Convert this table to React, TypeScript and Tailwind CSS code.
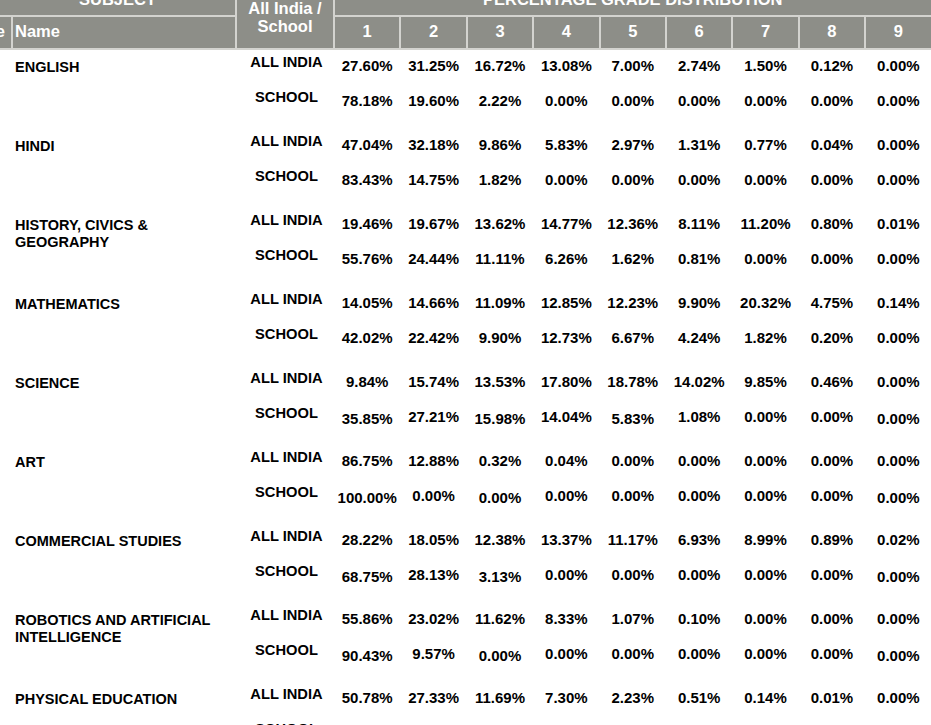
type Group = {
  name: string
  allIndia: string[]
  school: string[]
  low?: number[]
}

const groups: Group[] = [
  {
    name: 'ENGLISH',
    allIndia: ['27.60%', '31.25%', '16.72%', '13.08%', '7.00%', '2.74%', '1.50%', '0.12%', '0.00%'],
    school: ['78.18%', '19.60%', '2.22%', '0.00%', '0.00%', '0.00%', '0.00%', '0.00%', '0.00%'],
  },
  {
    name: 'HINDI',
    allIndia: ['47.04%', '32.18%', '9.86%', '5.83%', '2.97%', '1.31%', '0.77%', '0.04%', '0.00%'],
    school: ['83.43%', '14.75%', '1.82%', '0.00%', '0.00%', '0.00%', '0.00%', '0.00%', '0.00%'],
  },
  {
    name: 'HISTORY, CIVICS & GEOGRAPHY',
    allIndia: ['19.46%', '19.67%', '13.62%', '14.77%', '12.36%', '8.11%', '11.20%', '0.80%', '0.01%'],
    school: ['55.76%', '24.44%', '11.11%', '6.26%', '1.62%', '0.81%', '0.00%', '0.00%', '0.00%'],
  },
  {
    name: 'MATHEMATICS',
    allIndia: ['14.05%', '14.66%', '11.09%', '12.85%', '12.23%', '9.90%', '20.32%', '4.75%', '0.14%'],
    school: ['42.02%', '22.42%', '9.90%', '12.73%', '6.67%', '4.24%', '1.82%', '0.20%', '0.00%'],
  },
  {
    name: 'SCIENCE',
    allIndia: ['9.84%', '15.74%', '13.53%', '17.80%', '18.78%', '14.02%', '9.85%', '0.46%', '0.00%'],
    school: ['35.85%', '27.21%', '15.98%', '14.04%', '5.83%', '1.08%', '0.00%', '0.00%', '0.00%'],
    low: [0, 2, 4, 8],
  },
  {
    name: 'ART',
    allIndia: ['86.75%', '12.88%', '0.32%', '0.04%', '0.00%', '0.00%', '0.00%', '0.00%', '0.00%'],
    school: ['100.00%', '0.00%', '0.00%', '0.00%', '0.00%', '0.00%', '0.00%', '0.00%', '0.00%'],
    low: [0, 2, 8],
  },
  {
    name: 'COMMERCIAL STUDIES',
    allIndia: ['28.22%', '18.05%', '12.38%', '13.37%', '11.17%', '6.93%', '8.99%', '0.89%', '0.02%'],
    school: ['68.75%', '28.13%', '3.13%', '0.00%', '0.00%', '0.00%', '0.00%', '0.00%', '0.00%'],
    low: [0, 2, 8],
  },
  {
    name: 'ROBOTICS AND ARTIFICIAL INTELLIGENCE',
    allIndia: ['55.86%', '23.02%', '11.62%', '8.33%', '1.07%', '0.10%', '0.00%', '0.00%', '0.00%'],
    school: ['90.43%', '9.57%', '0.00%', '0.00%', '0.00%', '0.00%', '0.00%', '0.00%', '0.00%'],
    low: [0, 2, 8],
  },
  {
    name: 'PHYSICAL EDUCATION',
    allIndia: ['50.78%', '27.33%', '11.69%', '7.30%', '2.23%', '0.51%', '0.14%', '0.01%', '0.00%'],
    school: [],
  },
]

const cols = 'grid grid-cols-[54px_222px_96px_repeat(9,64.4px)] gap-x-[2px]'

function HeaderCell({ children, className = '' }: { children?: React.ReactNode; className?: string }) {
  return (
    <div className={`flex items-center bg-[#8d8e88] text-[16.5px] font-bold leading-[18px] text-white ${className}`}>
      {children}
    </div>
  )
}

function SubjectGroup({ group }: { group: Group }) {
  const low = group.low ?? []
  return (
    <div className={`${cols} grid-rows-[35px_44px]`}>
      <div className="row-span-2" />
      <div className="row-span-2 pl-[2px] pt-[8.5px] text-[14.5px] font-bold leading-[17px] text-black">
        {group.name}
      </div>

      <div className="pl-[3px] pt-[4px] text-center text-[14.7px] font-bold leading-[17px] text-black">
        ALL INDIA
      </div>
      {group.allIndia.map((v, i) => (
        <div key={`a${i}`} className="pt-[7px] text-center text-[15px] font-bold leading-[17px] text-black">
          {v}
        </div>
      ))}

      <div className="pl-[3px] pt-[4px] text-center text-[14.7px] font-bold leading-[17px] text-black">
        SCHOOL
      </div>
      {group.school.map((v, i) => (
        <div
          key={`s${i}`}
          className={`text-center text-[15px] font-bold leading-[17px] text-black ${
            low.includes(i) ? 'pt-[9px]' : 'pt-[7px]'
          }`}
        >
          {v}
        </div>
      ))}
    </div>
  )
}

export default function App() {
  return (
    <div className="h-[725px] w-[931px] overflow-hidden bg-white font-['Liberation_Sans','Arial',sans-serif]">
      <div className="-ml-[43px] -mt-[17px] w-max">
        <div className={`${cols} grid-rows-[32px_31px] gap-y-[2px] bg-[#d3d3cf] pb-[2px]`}>
          <HeaderCell className="col-span-2 justify-center pl-[43px]">SUBJECT</HeaderCell>
          <HeaderCell className="row-span-2 justify-center pt-[3px] text-center">
            All India /
            <br />
            School
          </HeaderCell>
          <HeaderCell className="col-span-9 justify-center">PERCENTAGE GRADE DISTRIBUTION</HeaderCell>

          <HeaderCell className="justify-end pb-[3px] pr-[6px]">Code</HeaderCell>
          <HeaderCell className="pb-[3px] pl-[2px]">Name</HeaderCell>
          {['1', '2', '3', '4', '5', '6', '7', '8', '9'].map((n) => (
            <HeaderCell key={n} className="justify-center pb-[3px]">
              {n}
            </HeaderCell>
          ))}
        </div>

        {groups.map((g) => (
          <SubjectGroup key={g.name} group={g} />
        ))}
      </div>
    </div>
  )
}
